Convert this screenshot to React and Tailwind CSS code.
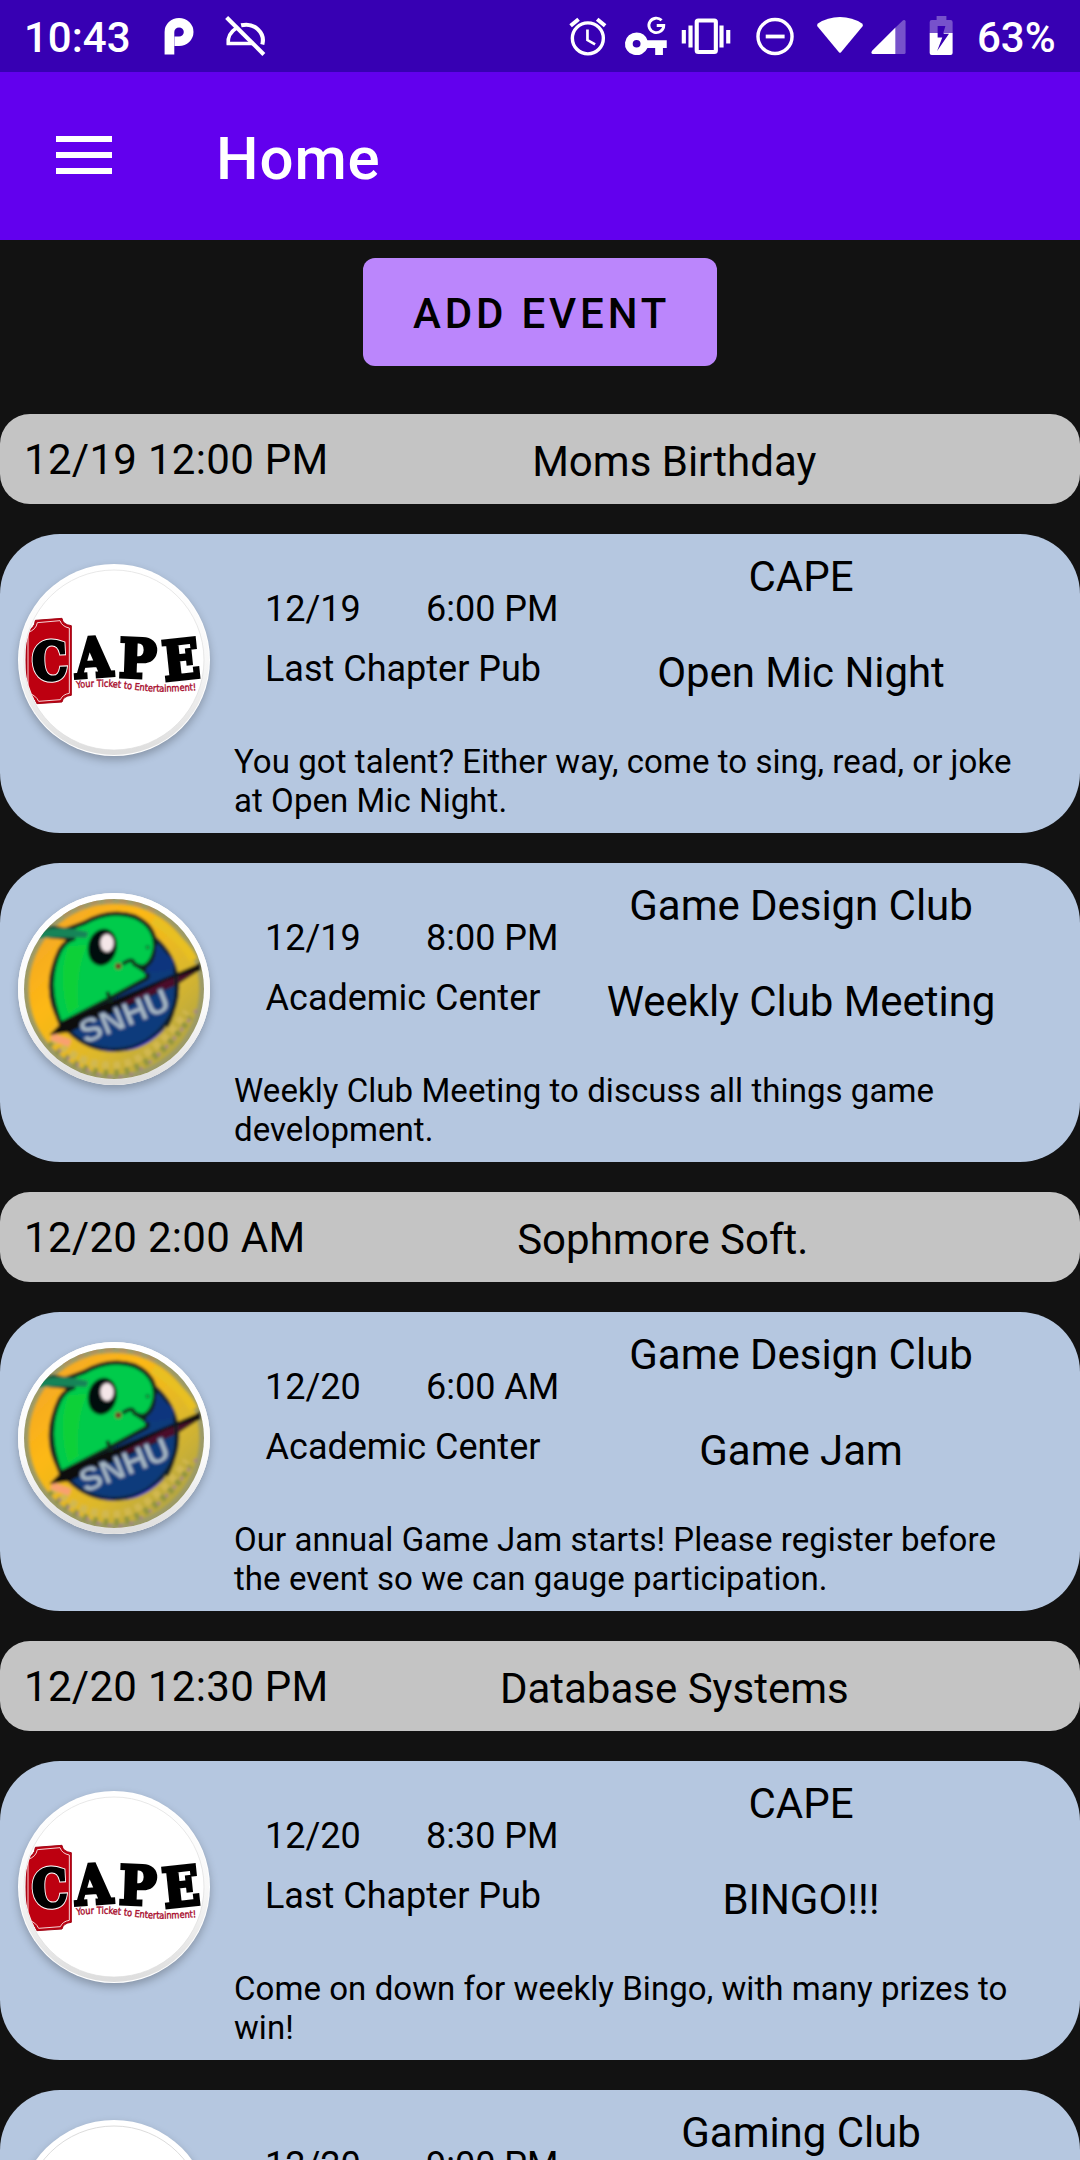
import React from 'react';

const items = [
  { kind: 'class', when: '12/19 12:00 PM', title: 'Moms Birthday' },
  { kind: 'club', logo: 'cape', date: '12/19', time: '6:00 PM', place: 'Last Chapter Pub', club: 'CAPE', name: 'Open Mic Night', text: 'You got talent? Either way, come to sing, read, or joke at Open Mic Night.' },
  { kind: 'club', logo: 'snhu', date: '12/19', time: '8:00 PM', place: 'Academic Center', club: 'Game Design Club', name: 'Weekly Club Meeting', text: 'Weekly Club Meeting to discuss all things game development.' },
  { kind: 'class', when: '12/20 2:00 AM', title: 'Sophmore Soft.' },
  { kind: 'club', logo: 'snhu', date: '12/20', time: '6:00 AM', place: 'Academic Center', club: 'Game Design Club', name: 'Game Jam', text: 'Our annual Game Jam starts! Please register before the event so we can gauge participation.' },
  { kind: 'class', when: '12/20 12:30 PM', title: 'Database Systems' },
  { kind: 'club', logo: 'cape', date: '12/20', time: '8:30 PM', place: 'Last Chapter Pub', club: 'CAPE', name: 'BINGO!!!', text: 'Come on down for weekly Bingo, with many prizes to win!' },
  { kind: 'club', logo: 'blank', date: '12/20', time: '9:00 PM', place: '', club: 'Gaming Club', name: '', text: '' },
];

function StatusBar() {
  return (
    <div className="flex h-[72px] shrink-0 bg-[#3700b3] pl-6 text-[42px] font-medium text-white">
      <span className="w-[131px] leading-[75px]">10:43</span>
      <svg className="h-[72px] w-[51.6px]" viewBox="150 0 50 72" preserveAspectRatio="none" fill="none">
        <path d="M164 54.5V32a9.3 9.3 0 1 1 9.3 9.3H169" stroke="#fff" strokeWidth="9.4" />
      </svg>
      <svg className="h-[72px] w-[82.7px]" viewBox="200 0 80 72" preserveAspectRatio="none" fill="none" stroke="#fff" strokeWidth="3.4">
        <path d="M219 17.500L255 54.500" strokeWidth="4" />
        <path d="M228.500 28C222.500 32 220 37.500 220.500 43.500H245" />
        <path d="M233 25.300C246 22 256.500 33 253.500 44.500" strokeWidth="4" />
      </svg>
      <div className="grow" />
      <svg className="h-[72px] w-[55.8px]" viewBox="560 0 54 72" preserveAspectRatio="none" fill="none" stroke="#fff">
        <ellipse cx="586" cy="38.300" rx="15" ry="15.500" strokeWidth="3.300" />
        <path d="M585.600 29.500V40L593 44.300" strokeWidth="2.600" />
        <path d="M569.300 25.700L577 19.200M602.700 25.700L595 19.200" strokeWidth="3.800" />
      </svg>
      <svg className="h-[72px] w-[57.8px]" viewBox="614 0 56 72" preserveAspectRatio="none">
        <path fill="#fff" fillRule="evenodd" d="M633 32.500a11.300 11.300 0 1 0 10.500 15.500H651V55h7.500V48h3.700v-7.800h-18.700A11.300 11.300 0 0 0 633 32.500zM633 40a3.800 3.800 0 1 1 0 7.600 3.800 3.800 0 0 1 0-7.600z" />
        <path d="M657.200 20.300A7.200 7.200 0 1 0 659.300 25.500H652.500" fill="none" stroke="#fff" strokeWidth="2.800" />
      </svg>
      <svg className="h-[72px] w-[68.2px]" viewBox="670 0 66 72" preserveAspectRatio="none" fill="#fff">
        <rect x="692" y="20.500" width="18.500" height="31.500" rx="1.500" fill="none" stroke="#fff" strokeWidth="4" />
        <path d="M677.500 30h4v13.500h-4zM684 25.500h4v22h-4zM714 25.500h4v22h-4zM720.500 30h4v13.500h-4z" />
      </svg>
      <svg className="h-[72px] w-[66.1px]" viewBox="736 0 64 72" preserveAspectRatio="none" fill="none" stroke="#fff">
        <ellipse cx="767" cy="36.500" rx="16.500" ry="17" strokeWidth="3.300" />
        <path d="M758 36.500H776.300" strokeWidth="3.800" />
      </svg>
      <svg className="h-[72px] w-[58.9px]" viewBox="800 0 57 72" preserveAspectRatio="none">
        <path fill="#fff" d="M808.300 26.500Q807 24.800 808.700 23.500Q818 17 830 17T851.300 23.500Q853 24.800 851.700 26.500L831 52.200Q830 53.400 829 52.200Z" />
      </svg>
      <svg className="h-[72px] w-[50.6px]" viewBox="857 0 49 72" preserveAspectRatio="none" fill="#fff">
        <path fillOpacity=".32" d="M883.600 27.500L891 20.200Q893.400 19.300 893.400 21.500V52.500Q893.400 54 892 54H883.600Z" />
        <path d="M883.600 27.500V54H861.500Q859.300 53.500 861 50.800Z" />
      </svg>
      <svg className="h-[72px] w-[58.9px]" viewBox="906 0 57 72" preserveAspectRatio="none">
        <path fill="#fff" fillOpacity=".32" fillRule="evenodd" d="M924 16h9.500v4h4q2 0 2 2v11h-9l2-7h-7.500v7H917.300V22q0-2 2-2H924z" />
        <path fill="#fff" fillRule="evenodd" d="M917.300 33H925v4.500h4.500L924.500 51 936 33.800h-5.300l.3-.8h8.500V53q0 2-2 2h-18.200q-2 0-2-2z" />
      </svg>
      <span className="w-[103px] leading-[75px]">63%</span>
    </div>
  );
}

function AppBar() {
  return (
    <header className="flex h-[168px] shrink-0 bg-[#6200ee] pl-14 text-white">
      <div className="flex w-[160px] flex-col gap-[10px] pt-16">
        <span className="h-[6px] w-14 bg-white" />
        <span className="h-[6px] w-14 bg-white" />
        <span className="h-[6px] w-14 bg-white" />
      </div>
      <h1 className="text-[60px] leading-[173px] font-medium tracking-[0.9px]">Home</h1>
    </header>
  );
}

function CapeLogo() {
  return (
    <svg className="size-full" viewBox="54 72 576 576">
      <defs>
        <clipPath id="capeClip"><circle cx="342" cy="360" r="267" /></clipPath>
        <linearGradient id="rim" x1="0" y1="0" x2="0" y2="1">
          <stop offset="0" stopColor="#fff" />
          <stop offset=".5" stopColor="#f8f8f8" />
          <stop offset="1" stopColor="#dedede" />
        </linearGradient>
      </defs>
      <circle cx="342" cy="360" r="276" fill="none" stroke="url(#rim)" strokeWidth="18" />
      <circle cx="342" cy="360" r="270" fill="#fff" stroke="#dcdcdc" strokeWidth="2" />
      <g clipPath="url(#capeClip)">
        <path d="M106 241L186 235Q188 254 214 257V466Q190 468 186 486L110 491Q104 470 78 462V272Q104 268 106 241Z" fill="#bd0010" stroke="#a00818" strokeWidth="3" />
        <path d="M112 248L180 242Q186 260 208 264V460Q188 463 181 479L116 484Q108 466 84 458V277Q108 270 112 248Z" fill="none" stroke="#fff" strokeWidth="2.500" />
      </g>
      <g fontFamily="'DejaVu Serif',serif" fontWeight="700" fill="#000" stroke="#000" strokeWidth="11">
        <g transform="rotate(-3 150 362)">
          <text x="96" y="419" fontSize="156" textLength="106" lengthAdjust="spacingAndGlyphs" stroke="#fff" strokeWidth="15">C</text>
          <text x="96" y="419" fontSize="156" textLength="106" lengthAdjust="spacingAndGlyphs" strokeWidth="9">C</text>
        </g>
        <text x="224" y="410" fontSize="162" textLength="112" lengthAdjust="spacingAndGlyphs" transform="rotate(-4 280 350)">A</text>
        <text x="358" y="412" fontSize="160" textLength="112" lengthAdjust="spacingAndGlyphs" transform="rotate(2 410 350)">P</text>
        <text x="488" y="417" fontSize="162" textLength="110" lengthAdjust="spacingAndGlyphs" transform="rotate(-6 540 360)">E</text>
      </g>
      <path id="tagline" d="M230 445Q300 435 370 445T480 455T602 450" fill="none" />
      <text fontFamily="'DejaVu Sans',sans-serif" fontSize="29" fill="#a80c2c" stroke="#a80c2c" strokeWidth="1.2">
        <textPath href="#tagline" textLength="360" lengthAdjust="spacingAndGlyphs">Your Ticket to Entertainment!</textPath>
      </text>
    </svg>
  );
}

function SnhuLogo() {
  return (
    <svg className="size-full" viewBox="54 69 576 576">
      <defs>
        <clipPath id="snhuClip"><circle cx="342" cy="357" r="270" /></clipPath>
        <filter id="soft"><feGaussianBlur stdDeviation="4.2" /></filter>
        <linearGradient id="gold" x1="0" y1="0" x2="1" y2="1">
          <stop offset="0" stopColor="#f0a030" />
          <stop offset=".35" stopColor="#fdb813" />
          <stop offset=".65" stopColor="#dcb82c" />
          <stop offset="1" stopColor="#9a9a50" />
        </linearGradient>
        <linearGradient id="rim2" x1="0" y1="0" x2="0" y2="1">
          <stop offset="0" stopColor="#fff" />
          <stop offset=".6" stopColor="#fafafa" />
          <stop offset="1" stopColor="#dedede" />
        </linearGradient>
      </defs>
      <circle cx="342" cy="357" r="279" fill="none" stroke="url(#rim2)" strokeWidth="18" />
      <g clipPath="url(#snhuClip)">
        <rect x="54" y="69" width="576" height="576" fill="#9c9a68" />
        <g filter="url(#soft)">
          <circle cx="342" cy="357" r="256" fill="url(#gold)" />
          <g fill="none" strokeWidth="22">
            <path d="M150 515Q230 615 342 610T570 440" stroke="#8f9440" strokeDasharray="14 18" />
            <path d="M160 505Q240 590 342 586T560 425" stroke="#d2b850" strokeDasharray="20 14" />
            <path d="M175 540Q250 612 342 622T590 420" stroke="#a5808c" strokeWidth="9" strokeDasharray="9 25" />
            <path d="M155 500L210 520" stroke="#f9a070" />
            <path d="M190 135Q330 50 480 130" stroke="#b0905c" strokeWidth="12" strokeDasharray="24 20" />
            <path d="M460 150Q560 220 580 270" stroke="#e8c020" strokeWidth="26" />
          </g>
          <circle cx="342" cy="350" r="190" fill="#073a7c" stroke="#0c2430" strokeWidth="12" />
          <path d="M262 520Q350 575 455 505L500 470Q430 550 342 542Q290 540 262 520Z" fill="#0b22c8" />
          <path d="M182 462Q130 340 180 240Q200 208 225 205L120 196Q150 165 195 180L250 160Q330 115 405 140Q470 170 465 235Q455 290 420 292Q450 310 440 325L330 385Z" fill="#06cb4c" stroke="#08221c" strokeWidth="13" />
          <path d="M112 190Q165 160 265 186L260 204Q180 200 120 205Z" fill="#188458" />
          <path d="M205 230Q172 320 205 430L235 410Q225 310 260 225Z" fill="#10d32c" opacity=".6" />
          <path d="M148 495L190 452L600 280V300L535 342L210 486Z" fill="#07100f" />
          <path d="M360 402L500 330L590 302L530 344L370 408Z" fill="#4c0d2c" />
          <path d="M322 365L332 398M368 282Q400 260 402 282L440 296" fill="none" stroke="#07281c" strokeWidth="11" />
          <path d="M468 225L520 270V300L430 310Q470 280 468 225Z" fill="#08367e" />
          <path d="M525 300Q540 400 500 470" fill="none" stroke="#0a1a22" strokeWidth="10" />
          <ellipse cx="307" cy="232" rx="43" ry="56" fill="#060d0d" transform="rotate(12 307 232)" />
          <ellipse cx="321" cy="219" rx="20" ry="27" fill="#f4e6e8" />
          <circle cx="355" cy="289" r="9" fill="#7c2820" />
          <circle cx="443" cy="232" r="7" fill="#078a3a" />
          <text x="254" y="522" transform="rotate(-22 254 522)" fontFamily="'Liberation Sans',sans-serif" fontWeight="700" fontSize="98" textLength="284" lengthAdjust="spacingAndGlyphs" fill="#a9bac4" stroke="#55689a" strokeWidth="3">SNHU</text>
        </g>
      </g>
    </svg>
  );
}

function BlankLogo() {
  return (
    <svg className="size-full" viewBox="0 0 192 192">
      <circle cx="96" cy="96" r="90" fill="#fff" stroke="#dcdcdc" strokeWidth="1" />
    </svg>
  );
}

const logos = { cape: CapeLogo, snhu: SnhuLogo, blank: BlankLogo };

function ClassRow({ item }) {
  return (
    <div className="flex h-[90px] shrink-0 overflow-hidden rounded-[30px] bg-[#c4c4c4] pl-6">
      <span className="leading-[91px] tracking-[0.3px]">{item.when}</span>
      <span className="grow pr-[60px] text-center leading-[95px]">{item.title}</span>
    </div>
  );
}

function ClubCard({ item }) {
  const Logo = logos[item.logo];
  return (
    <article className="flex h-[299px] shrink-0 rounded-[60px] bg-[#b5c7e0] pl-[18px]">
      <div className="mt-[30px] size-[192px] shrink-0 rounded-full bg-white shadow-[0_4px_9px_rgba(0,0,0,0.25)]">
        <Logo />
      </div>
      <div className="grow">
        <div className="flex h-[208px]">
          <div className="flex w-[386px] flex-col gap-[18px] pt-[54px] text-[36px] leading-[42px]">
            <div className="flex pl-[55px]">
              <span className="w-[161px]">{item.date}</span>
              <span>{item.time}</span>
            </div>
            <span className="text-center">{item.place}</span>
          </div>
          <div className="flex w-[410px] flex-col gap-[47px] pt-[18px] text-center leading-[49px] tracking-[-0.05px]">
            <span>{item.club}</span>
            <span>{item.name}</span>
          </div>
        </div>
        <p className="ml-6 w-[796px] text-[33px] leading-[39px] tracking-[0.06px]">{item.text}</p>
      </div>
    </article>
  );
}

export default function App() {
  return (
    <div className="flex h-[2160px] w-[1080px] flex-col overflow-hidden bg-[#121212] font-['Roboto',sans-serif] text-[42px] text-black">
      <StatusBar />
      <AppBar />
      <button className="mt-[18px] ml-[363px] h-[108px] w-[354px] shrink-0 rounded-[12px] bg-[#bb86fc] pl-[50px] text-left font-medium tracking-[3.85px] leading-[111px]">ADD EVENT</button>
      <main className="mt-12 flex flex-col gap-[30px]">
        {items.map((item, i) => item.kind === 'class'
          ? <ClassRow key={i} item={item} />
          : <ClubCard key={i} item={item} />)}
      </main>
    </div>
  );
}
